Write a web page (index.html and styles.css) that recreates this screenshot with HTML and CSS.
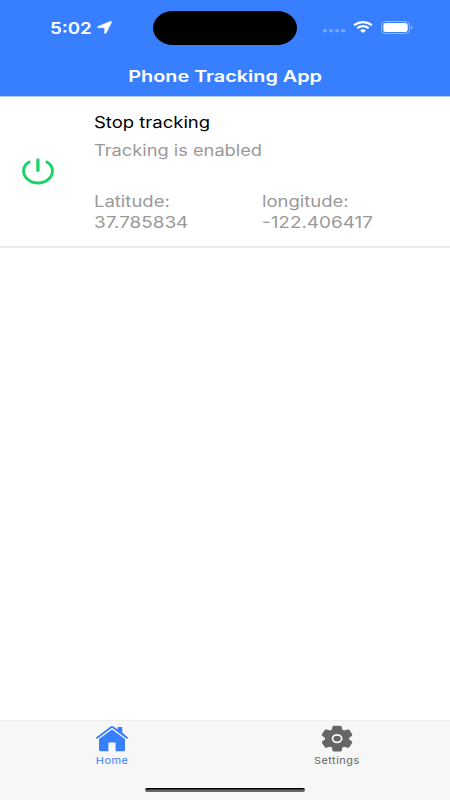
FILE: index.html
```html
<!DOCTYPE html>
<html lang="en">
<head>
  <meta charset="UTF-8" />
  <meta name="viewport" content="width=device-width, initial-scale=1.0" />
  <title>Phone Tracking App</title>
  <link rel="stylesheet" href="styles.css">
</head>
<body>
  <header class="header">
    <div class="status-bar">
      <div class="status-left">
        <span class="wide time">5:02</span>
        <svg class="location" width="15" height="13" viewBox="0 0 15 13"><path d="M13.6.2Q15.2-.1 14.6 1.2L9.2 12Q8.1 13.7 7.6 12V7.4Q7.5 6.8 6.8 6.8H1.2Q-.6 6.4.9 5.4Z" fill="#fff" stroke="#fff" stroke-width=".4"/></svg>
      </div>
      <div class="island"></div>
      <div class="status-right">
        <svg class="signal" width="23" height="4" viewBox="0 0 23 4" fill="#79a9ff"><rect x="0" y=".2" width="4" height="3" rx="1"/><rect x="6.1" y=".2" width="4" height="3" rx="1"/><rect x="12.2" y=".2" width="4" height="3" rx="1"/><rect x="18.3" y=".2" width="4" height="3" rx="1"/></svg>
        <svg class="wifi" width="20" height="12" viewBox="0 0 20 12" preserveAspectRatio="none" fill="none" stroke="#fff" stroke-width="2.3"><path d="M1.1 4.2Q5.1 1.2 10 1.2T18.9 4.2"/><path d="M4.3 7.2Q6.9 5.1 10 5.1T15.7 7.2"/><path d="M7 9.5Q10 7.1 13 9.5L10 11.9Z" fill="#fff" stroke="none"/></svg>
        <svg class="battery" width="32" height="13" viewBox="0 0 32 13"><rect x=".5" y=".5" width="28" height="12" rx="4" fill="none" stroke="#94bbff"/><rect x="2.3" y="2" width="24.4" height="9" rx="2.8" fill="#fff"/><path d="M30.2 4.4Q33 6.5 30.2 8.6Z" fill="#94bbff"/></svg>
      </div>
    </div>
    <h1 class="title"><span class="wide">Phone Tracking App</span></h1>
  </header>

  <main class="content">
    <div class="tracking-item">
      <button class="power" title="Stop tracking">
        <svg width="32" height="27" viewBox="0 0 32 27" fill="none" stroke="#1bd467" stroke-linecap="round"><path d="M7.2 4.1C3.6 6.2 1.6 9.2 1.6 12.7C1.6 19.7 8 25 16 25S30.4 19.7 30.4 12.7C30.4 9.2 28.4 6.2 24.8 4.1" stroke-width="2.9"/><path d="M15.9 1.8V12.3" stroke-width="3.3"/></svg>
      </button>
      <div class="details">
        <h2 class="item-title"><span class="wide">Stop tracking</span></h2>
        <p class="item-status"><span class="wide">Tracking is enabled</span></p>
        <div class="coords">
          <div class="coord">
            <span class="wide">Latitude:</span>
            <span class="wide coord-value">37.785834</span>
          </div>
          <div class="coord">
            <span class="wide">longitude:</span>
            <span class="wide coord-value">-122.406417</span>
          </div>
        </div>
      </div>
    </div>
  </main>

  <footer class="footer">
    <nav class="tabs">
      <a class="tab active">
        <svg width="34" height="27" viewBox="0 0 34 27"><path d="M22.6 3.4V2H27.2V7.6L33.2 12.8L31.9 14L17 2.8L2.1 14L.8 12.8L15.2 1.7Q17 .4 18.8 1.7L22.6 4.6Z" fill="currentColor"/><path d="M4 14.1L17 4.5L30 14.1V25Q30 26.2 28.5 26.2H20.6V17.4H13.4V26.2H5.5Q4 26.2 4 25Z" fill="currentColor"/></svg>
        <span class="wide tab-label">Home</span>
      </a>
      <a class="tab">
        <svg width="34" height="27" viewBox="0 0 34 27"><path d="M12.4 2Q12.6.7 14 .7H20.2Q21.6.7 21.8 2L22.3 4.6L24.2 5.5L27.6 4.5Q28.9 4.1 29.5 5.1L32.1 9.2Q32.7 10.3 31.7 11L29.2 12.7V14.5L31.7 16.2Q32.7 16.9 32.1 17.9L29.5 22.1Q28.9 23.1 27.6 22.7L24.2 21.7L22.3 22.6L21.8 25.2Q21.6 26.4 20.2 26.4H14Q12.6 26.4 12.4 25.2L11.9 22.6L10 21.7L6.6 22.7Q5.3 23.1 4.7 22.1L2 17.9Q1.4 16.9 2.4 16.2L4.9 14.5V12.7L2.4 11Q1.4 10.3 2 9.2L4.7 5.1Q5.3 4.1 6.6 4.5L10 5.5L11.9 4.6Z" fill="currentColor"/><ellipse cx="17.1" cy="13.6" rx="4.6" ry="3.8" fill="none" stroke="#f7f7f7" stroke-width="1.8"/></svg>
        <span class="wide tab-label">Settings</span>
      </a>
    </nav>
    <div class="home-indicator"></div>
  </footer>
</body>
</html>
```
FILE: styles.css
```css
* {
  box-sizing: border-box;
}

body {
  margin: 0;
  height: 100vh;
  display: flex;
  flex-direction: column;
  font-family: Inter, "Liberation Sans", sans-serif;
  font-size: 16px;
  background-color: #fff;
  color: #000;
}

h1, h2, p {
  margin: 0;
  font-size: 16px;
  font-weight: 400;
}

svg {
  display: block;
}

/* expanded letterforms */
.wide {
  display: inline-block;
  white-space: nowrap;
  transform: scaleX(1.155);
  transform-origin: left center;
}

.header {
  height: 97px;
  background-color: #387fff;
  border-bottom: 1px solid #a9c8fb;
  color: #fff;
}

.status-bar {
  display: flex;
  align-items: center;
  height: 56px;
}

.status-left {
  display: flex;
  align-items: center;
  width: 153px;
  padding-left: 50px;
  padding-bottom: 1px;
}

.time {
  width: 47px;
  font-weight: 600;
  transform: scaleX(1.17);
}

.island {
  width: 144px;
  height: 34px;
  border-radius: 20px / 17px;
  background-color: #000;
}

.status-right {
  display: flex;
  align-items: center;
  padding-left: 26px;
  padding-bottom: 2px;
}

.signal {
  margin-top: 8px;
}

.wifi {
  margin-left: 7px;
}

.battery {
  margin-left: 8px;
}

.title {
  line-height: 40px;
  text-align: center;
}

.title .wide {
  font-weight: 600;
  transform: scaleX(1.24);
  transform-origin: center;
}

.content {
  flex: 1;
}

.tracking-item {
  display: flex;
  height: 151px;
  border-bottom: 2px solid #ebebeb;
}

.power {
  display: flex;
  align-items: center;
  width: 94px;
  padding: 0 0 0 22px;
  border: none;
  background: none;
  cursor: pointer;
}

.details {
  flex: 1;
  padding-top: 13px;
}

.item-title {
  line-height: 24px;
}

.item-status {
  margin-top: 4px;
  line-height: 24px;
  color: #999;
}

.item-status .wide {
  transform: scaleX(1.14);
}

.coords {
  display: flex;
  margin-top: 29px;
  color: #999;
}

.coord {
  display: flex;
  flex-direction: column;
  width: 168px;
  line-height: 21px;
}

.coord-value {
  transform: scaleX(1.18);
}

.footer {
  height: 80px;
  background-color: #f7f7f7;
  border-top: 1px solid #ededed;
}

.tabs {
  display: flex;
  height: 66px;
}

.tab {
  flex: 1;
  display: flex;
  flex-direction: column;
  align-items: center;
  padding-top: 4px;
  padding-right: 1px;
  color: #656565;
}

.tab.active {
  color: #387fff;
}

.tab-label {
  margin-top: 3px;
  font-size: 9.5px;
  line-height: 12px;
  transform-origin: center;
  letter-spacing: 0.4px;
}

.home-indicator {
  width: 160px;
  height: 4px;
  margin: 1px auto 0;
  border-radius: 3px;
  background: linear-gradient(#000 20%, #666 50%);
}
```
